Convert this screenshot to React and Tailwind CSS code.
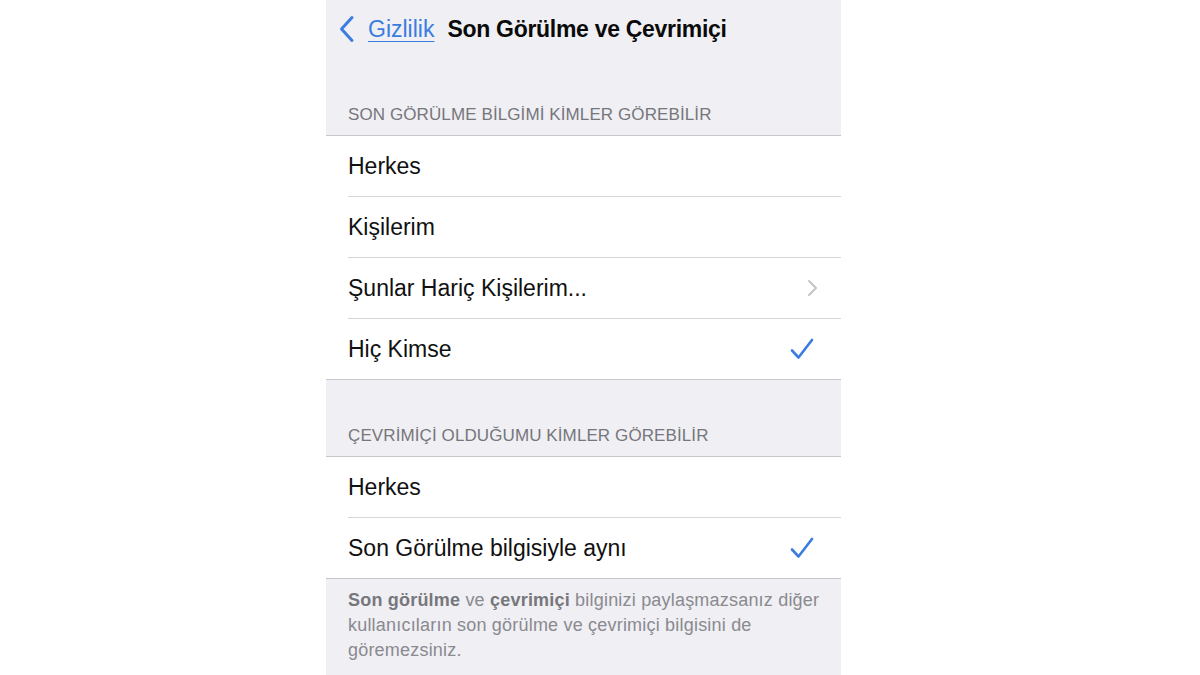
import React from "react";

const font = { fontFamily: '"Liberation Sans", Arial, sans-serif' };

function Check() {
  return (
    <svg width="24" height="22" viewBox="0 0 24 22" fill="none">
      <path d="M2 12.5 L8.5 19.5 L22 2" stroke="#3a7ddf" strokeWidth="2.6" strokeLinecap="round" strokeLinejoin="round" />
    </svg>
  );
}

function Chevron() {
  return (
    <svg width="11" height="18" viewBox="0 0 11 18" fill="none">
      <path d="M2 2 L9 9 L2 16" stroke="#c4c4c8" strokeWidth="2" strokeLinecap="round" strokeLinejoin="round" />
    </svg>
  );
}

function Row({ label, last, accessory }) {
  return (
    <div className="pl-[22px]">
      <div
        className={
          "flex items-center justify-between " +
          (last ? "h-[60px]" : "h-[61px] border-b border-[#d6d6da]")
        }
      >
        <span className="text-[23px] leading-none text-[#111]">{label}</span>
        {accessory === "check" && (
          <span className="mr-[27px] flex items-center">
            <Check />
          </span>
        )}
        {accessory === "chevron" && (
          <span className="mr-[23px] flex items-center">
            <Chevron />
          </span>
        )}
      </div>
    </div>
  );
}

function SectionHeader({ children, height }) {
  return (
    <div className={"flex items-end pl-[22px] pb-[10px] " + height}>
      <span className="text-[17px] leading-[20px] tracking-[0.1px] text-[#76767b]">{children}</span>
    </div>
  );
}

export default function App() {
  return (
    <div className="flex h-[675px] w-[1200px] bg-white pl-[326px]" style={font}>
      <div className="h-[675px] w-[515px] overflow-hidden bg-[#efeff4]">
        {/* navigation bar */}
        <div className="flex h-[58px] items-center pl-[12px]">
          <svg width="18" height="28" viewBox="0 0 18 28" fill="none">
            <path d="M14 2.5 L3.5 14 L14 25.5" stroke="#3a7ddf" strokeWidth="3" strokeLinecap="round" strokeLinejoin="round" />
          </svg>
          <span className="ml-[12px] text-[23px] leading-none text-[#3a7ddf] underline decoration-1 underline-offset-[4px]">
            Gizlilik
          </span>
          <span className="ml-[13px] text-[23px] font-bold leading-none tracking-[-0.3px] text-[#0a0a0a]">
            Son Görülme ve Çevrimiçi
          </span>
        </div>

        <SectionHeader height="h-[77px]">SON GÖRÜLME BİLGİMİ KİMLER GÖREBİLİR</SectionHeader>
        <div className="border-y border-[#c8c7cc] bg-white">
          <Row label="Herkes" />
          <Row label="Kişilerim" />
          <Row label="Şunlar Hariç Kişilerim..." accessory="chevron" />
          <Row label="Hiç Kimse" accessory="check" last />
        </div>

        <SectionHeader height="h-[76px]">ÇEVRİMİÇİ OLDUĞUMU KİMLER GÖREBİLİR</SectionHeader>
        <div className="border-y border-[#c8c7cc] bg-white">
          <Row label="Herkes" />
          <Row label="Son Görülme bilgisiyle aynı" accessory="check" last />
        </div>

        <p className="pl-[22px] pr-[12px] pt-[9px] text-[18px] leading-[25px] tracking-[0.2px] text-[#8a8a8f]">
          <span className="font-bold text-[#77777c]">Son görülme</span> ve{" "}
          <span className="font-bold text-[#77777c]">çevrimiçi</span> bilginizi paylaşmazsanız diğer
          kullanıcıların son görülme ve çevrimiçi bilgisini de göremezsiniz.
        </p>
      </div>
    </div>
  );
}
